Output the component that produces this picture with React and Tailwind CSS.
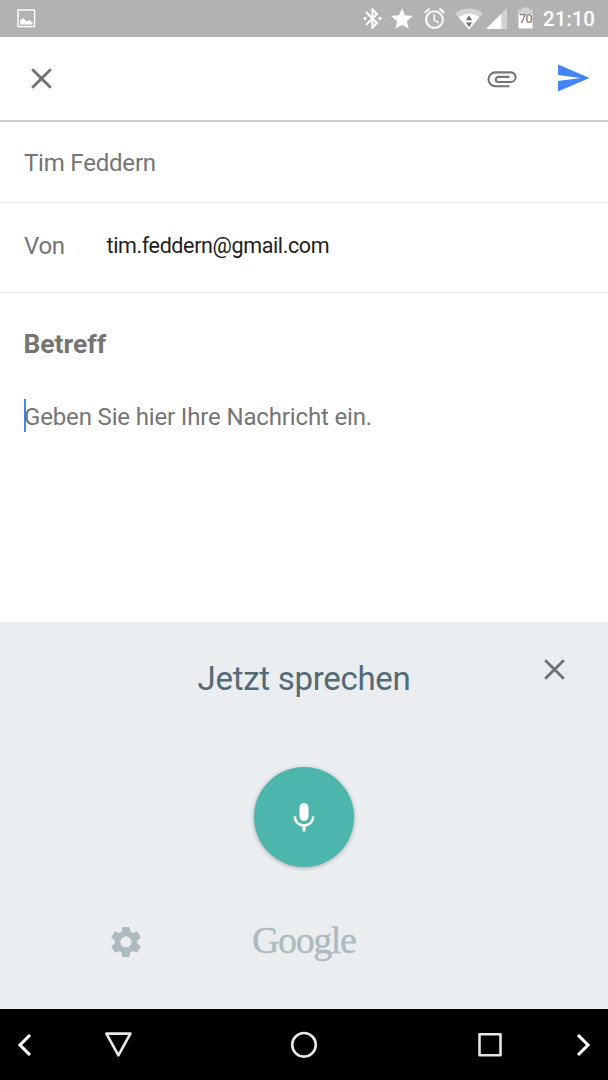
import { MdAlarm, MdBluetoothConnected, MdSend, MdStar } from "react-icons/md";

function CloseIcon({ className }) {
  return (
    <svg viewBox="0 0 21 21" className={className} fill="none" stroke="#717171" strokeWidth="2.8">
      <path d="M1.2 1.2 19.8 19.8M19.8 1.2 1.2 19.8" />
    </svg>
  );
}

function StatusBar() {
  return (
    <div className="flex h-[37px] shrink-0 items-center bg-[#b2b2b2] pr-[12px] pl-[17px] text-white">
      <svg viewBox="0 0 19 19" className="size-[19px]">
        <rect x="1" y="1" width="16.6" height="16.6" fill="none" stroke="currentColor" strokeWidth="1.4" />
        <path d="M3 15.5v-3.5l2-2.4 1.3-.4 3.4 3.3 2.6-1.4 3.4 2.5v1.9z" fill="currentColor" />
      </svg>
      <div className="ml-auto flex items-center">
        <MdBluetoothConnected className="size-[25px]" />
        <MdStar className="ml-[4px] size-[26px]" />
        <MdAlarm className="ml-[7px] size-[25px]" />
        <svg viewBox="0 0 28 22" className="ml-[8px] h-[22px] w-[28px]">
          <path d="M0 5.2a23 23 0 0 1 28 0L14 21.4z" fill="#d1d4d5" />
          <path d="M3.6 9.3a17 17 0 0 1 20.8 0L14 21.4z" fill="currentColor" />
          <path d="M14 7.2l3.1 5h-6.2zM14 19.2l-3-4.6h6z" fill="#6f7072" />
        </svg>
        <svg viewBox="0 0 21 21" className="ml-[3px] size-[21px]">
          <path d="M0 21 21 0v21z" fill="#d1d4d5" />
          <path d="M0 21 15.3 5.7V21z" fill="currentColor" />
        </svg>
        <div className="relative mb-px ml-[11px] flex h-[22px] w-[15px] items-center justify-center">
          <svg viewBox="0 0 15 22" className="absolute inset-0 size-full">
            <path d="M.5 8V2.5H4V.5h7v2h3.5V8z" fill="#d1d4d5" />
            <path d="M.5 7h14v14.5H.5z" fill="currentColor" />
          </svg>
          <span className="relative mt-[2px] text-[12.5px] leading-none font-medium tracking-[-0.8px] text-[#858585]">70</span>
        </div>
        <span className="mt-[2px] ml-[10px] w-[53px] text-[20.5px] leading-none font-medium">21:10</span>
      </div>
    </div>
  );
}

function Toolbar() {
  return (
    <header className="flex h-[85px] shrink-0 items-center border-b-2 border-[#d0d0d0] pr-[17px] pl-[31px]">
      <button aria-label="Schließen" className="mb-px">
        <CloseIcon className="size-[21px]" />
      </button>
      <button aria-label="Anhang" className="mt-px ml-auto">
        <svg viewBox="0 0 30 17" className="h-[17px] w-[30px]" fill="none" stroke="#757575" strokeWidth="2.1">
          <path d="M22.5 15.2H8.4a6.9 6.9 0 0 1 0-13.8h15.4a4.8 4.8 0 0 1 0 9.6H11.3a2.5 2.5 0 0 1 0-5.1h11.2" />
        </svg>
      </button>
      <button aria-label="Senden" className="mb-px ml-[38.5px]">
        <MdSend className="size-[36px] text-[#4285f4]" />
      </button>
    </header>
  );
}

function VoicePanel() {
  return (
    <section className="flex h-[387px] shrink-0 flex-col bg-[#eaeef1]">
      <div className="grid h-[112px] grid-cols-[1fr_auto_1fr] items-center">
        <h2 className="col-start-2 text-[33px] leading-none tracking-[-0.3px] text-[#546a75]">Jetzt sprechen</h2>
        <button aria-label="Abbrechen" className="mr-[43px] mb-[17px] justify-self-end">
          <CloseIcon className="size-[21px]" />
        </button>
      </div>
      <button
        aria-label="Aufnehmen"
        className="mx-auto mt-[32.5px] flex size-[100.5px] items-center justify-center rounded-full bg-[#4db6ac] shadow-[0_1px_4px_rgba(0,0,0,0.3)]"
      >
        <svg viewBox="0 0 24 24" className="mt-[3px] size-[36px]" fill="#fff">
          <path d="M12 14c1.66 0 2.99-1.34 2.99-3L15 5c0-1.66-1.34-3-3-3S9 3.34 9 5v6c0 1.66 1.34 3 3 3zm5.3-3c0 3-2.54 5.1-5.3 5.1S6.7 14 6.7 11H5c0 3.41 2.72 6.23 6 6.72V21h2v-3.28c3.28-.48 6-3.3 6-6.72h-1.7z" />
        </svg>
      </button>
      <div className="mt-[56px] grid grid-cols-[252px_104px_252px] items-center">
        <svg viewBox="0 0 24 24" className="ml-[108px] size-[36px]" fill="#adbbc0">
          <path d="M19.43 12.98c.04-.32.07-.64.07-.98s-.03-.66-.07-.98l2.11-1.65c.19-.15.24-.42.12-.64l-2-3.46c-.12-.22-.39-.3-.61-.22l-2.49 1c-.52-.4-1.08-.73-1.69-.98l-.38-2.65C14.46 2.18 14.25 2 14 2h-4c-.25 0-.46.18-.49.42l-.38 2.65c-.61.25-1.17.59-1.69.98l-2.49-1c-.23-.09-.49 0-.61.22l-2 3.46c-.13.22-.07.49.12.64l2.11 1.65c-.04.32-.07.65-.07.98s.03.66.07.98l-2.11 1.65c-.19.15-.24.42-.12.64l2 3.46c.12.22.39.3.61.22l2.49-1c.52.4 1.08.73 1.69.98l.38 2.65c.03.24.24.42.49.42h4c.25 0 .46-.18.49-.42l.38-2.65c.61-.25 1.17-.59 1.69-.98l2.49 1c.23.09.49 0 .61-.22l2-3.46c.12-.22.07-.49-.12-.64l-2.11-1.65zM12 15.7c-2.04 0-3.7-1.66-3.7-3.7s1.66-3.7 3.7-3.7 3.7 1.66 3.7 3.7-1.66 3.7-3.7 3.7z" />
        </svg>
        <span className="mb-[3px] font-['Liberation_Serif',serif] text-[38px] leading-[34px] tracking-[-1.4px] text-[#adbbc0] [-webkit-text-stroke:0.4px_#adbbc0]">
          Google
        </span>
      </div>
    </section>
  );
}

function NavBar() {
  return (
    <nav className="flex h-[71px] shrink-0 items-center bg-black px-[17px]">
      <svg viewBox="0 0 15 22" className="h-[22px] w-[15px]" fill="none" stroke="#fff" strokeWidth="3">
        <path d="M13 1 3 11l10 10" />
      </svg>
      <div className="mx-[72px] flex flex-1 items-center justify-between">
        <svg viewBox="0 0 28 28" className="size-[28px]" fill="none" stroke="#e6e9ea" strokeWidth="2.6" strokeLinejoin="round">
          <path d="M2.4 2.6h24l-12 21.7z" />
        </svg>
        <svg viewBox="0 0 28 28" className="size-[28px]" fill="none" stroke="#e6e9ea" strokeWidth="2.6">
          <circle cx="14" cy="13.8" r="11.8" />
        </svg>
        <svg viewBox="0 0 28 28" className="size-[28px]" fill="none" stroke="#e6e6e6" strokeWidth="2.6" strokeLinejoin="round">
          <rect x="3.5" y="3.2" width="21" height="21" />
        </svg>
      </div>
      <svg viewBox="0 0 15 22" className="h-[22px] w-[15px]" fill="none" stroke="#fff" strokeWidth="3">
        <path d="m2 1 10 10L2 21" />
      </svg>
    </nav>
  );
}

export default function App() {
  return (
    <div className="flex h-[1080px] w-[608px] flex-col overflow-hidden bg-white font-[Roboto,sans-serif] text-[#757575]">
      <StatusBar />
      <Toolbar />
      <main className="flex flex-1 flex-col">
        <div className="flex h-[81px] shrink-0 items-center border-b border-[#e8eced] pt-px pl-6 text-[24px] tracking-[-0.2px]">
          Tim Feddern
        </div>
        <div className="flex h-[90px] shrink-0 items-center border-b border-[#e4e6e7] pb-[4px] pl-6">
          <span className="w-[82.5px] text-[24px] tracking-[-0.3px]">Von</span>
          <span className="pt-px text-[21.5px] tracking-[-0.38px] text-[#212121]">tim.feddern@gmail.com</span>
        </div>
        <div className="mt-[33px] pl-[23.5px] text-[26.4px] leading-[36px] font-bold">Betreff</div>
        <div className="mt-[37px] ml-[23.5px] flex h-[33px] items-center">
          <span className="h-[33px] w-[2.5px] bg-[#4285f4]" />
          <span className="mt-[2px] -ml-[2px] text-[24px] leading-none tracking-[-0.15px]">
            Geben Sie hier Ihre Nachricht ein.
          </span>
        </div>
      </main>
      <VoicePanel />
      <NavBar />
    </div>
  );
}
